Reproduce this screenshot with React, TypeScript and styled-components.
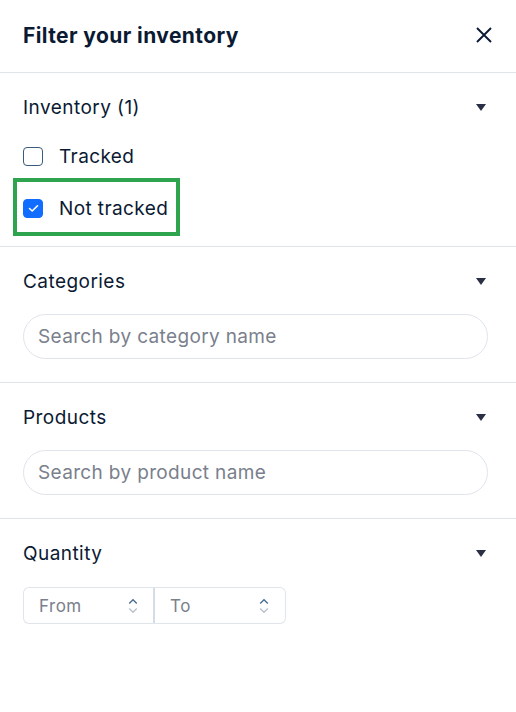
import React from "react";
import styled, { createGlobalStyle } from "styled-components";

const Global = createGlobalStyle`
  html, body { margin: 0; padding: 0; background: #fff; }
  body { font-family: "Inter", "Noto Sans", sans-serif; color: #0b1a33; }
  * { box-sizing: border-box; }
`;

const Panel = styled.div`
  width: 516px;
  min-height: 712px;
  background: #fff;
  display: flex;
  flex-direction: column;
  & > * { flex: none; }
`;

const Header = styled.div`
  height: 73px;
  display: flex;
  align-items: center;
  justify-content: space-between;
  padding: 0 24px 2px 23px;
  border-bottom: 1px solid #e1e4e8;
`;

const Title = styled.h1`
  margin: 0;
  font-size: 21px;
  font-weight: 700;
  letter-spacing: 0.4px;
  color: #0b1a33;
`;

const CloseBtn = styled.button`
  border: 0;
  background: none;
  padding: 0;
  width: 16px;
  height: 16px;
  display: flex;
  align-items: center;
  justify-content: center;
  cursor: pointer;
`;

const Section = styled.section<{ $last?: boolean }>`
  padding: 21px 28px 23px 23px;
  border-bottom: ${(p) => (p.$last ? "none" : "1px solid #e1e4e8")};
  display: flex;
  flex-direction: column;
`;

const SectionHead = styled.div`
  display: flex;
  align-items: center;
  justify-content: space-between;
  height: 26px;
  margin-bottom: 20px;
`;

const SectionTitle = styled.h2`
  margin: 0;
  font-size: 19px;
  font-weight: 400;
  letter-spacing: 0.45px;
  color: #0b1a33;
`;

const Caret = styled.div`
  width: 0;
  height: 0;
  border-left: 5px solid transparent;
  border-right: 5px solid transparent;
  border-top: 7px solid #2b2f45;
  margin-right: 2px;
`;

const CheckList = styled.div`
  display: flex;
  flex-direction: column;
  margin-top: -9px;
  margin-bottom: -13px;
`;

const CheckRow = styled.label<{ $highlight?: boolean }>`
  display: flex;
  align-items: center;
  gap: 16px;
  font-size: 19px;
  letter-spacing: 0.4px;
  color: #0b1a33;
  height: ${(p) => (p.$highlight ? "58px" : "50px")};
  margin-left: ${(p) => (p.$highlight ? "-10px" : "0")};
  margin-top: ${(p) => (p.$highlight ? "-3px" : "0")};
  padding: ${(p) => (p.$highlight ? "3px 0 0 6px" : "0")};
  width: ${(p) => (p.$highlight ? "167px" : "auto")};
  border: ${(p) => (p.$highlight ? "4px solid #2ea44f" : "none")};
`;

const Box = styled.span<{ $checked?: boolean }>`
  width: 20px;
  height: 19px;
  border-radius: 4px;
  flex: none;
  display: flex;
  align-items: center;
  justify-content: center;
  border: 1.5px solid ${(p) => (p.$checked ? "#116dff" : "#385c7a")};
  background: ${(p) => (p.$checked ? "#116dff" : "#fff")};
`;

const SearchInput = styled.div`
  height: 45px;
  border: 1px solid #dfe5eb;
  border-radius: 23px;
  display: flex;
  align-items: center;
  padding: 0 14px;
  font-size: 19px;
  letter-spacing: 0.35px;
  color: #7a808c;
`;

const RangeRow = styled.div`
  display: flex;
  width: 263px;
  height: 37px;
  margin-top: 1px;
  margin-bottom: 70px;
`;

const RangeField = styled.div<{ $side: "left" | "right" }>`
  flex: 1;
  display: flex;
  align-items: center;
  justify-content: space-between;
  padding: ${(p) => (p.$side === "left" ? "0 15px 0 15px" : "0 16px 0 15px")};
  border: 1px solid #dfe5eb;
  border-left-width: ${(p) => (p.$side === "right" ? "0" : "1px")};
  border-right: ${(p) => (p.$side === "left" ? "2px solid #d4dde6" : "1px solid #dfe5eb")};
  border-radius: ${(p) => (p.$side === "left" ? "6px 0 0 6px" : "0 6px 6px 0")};
  font-size: 17px;
  letter-spacing: 0.5px;
  color: #7a808c;
`;

const Spinner = () => (
  <svg width="10" height="20" viewBox="0 0 10 20">
    <path d="M1.2 7.5 L5 3.8 L8.8 7.5" fill="none" stroke="#4a6e90" strokeWidth="1.4" />
    <path d="M1.2 12.5 L5 16.2 L8.8 12.5" fill="none" stroke="#b8c2cc" strokeWidth="1.4" />
  </svg>
);

const Check = () => (
  <svg width="11" height="9" viewBox="0 0 11 9">
    <path d="M1.5 4.5 L4.2 7 L9.5 1.8" fill="none" stroke="#fff" strokeWidth="1.6" strokeLinecap="round" strokeLinejoin="round" />
  </svg>
);

export default function App() {
  return (
    <>
      <Global />
      <Panel>
        <Header>
          <Title>Filter your inventory</Title>
          <CloseBtn aria-label="Close">
            <svg width="16" height="16" viewBox="0 0 16 16">
              <path d="M1 1 L15 15 M15 1 L1 15" stroke="#0b1a33" strokeWidth="1.9" />
            </svg>
          </CloseBtn>
        </Header>

        <Section>
          <SectionHead>
            <SectionTitle>Inventory (1)</SectionTitle>
            <Caret />
          </SectionHead>
          <CheckList>
            <CheckRow>
              <Box />
              Tracked
            </CheckRow>
            <CheckRow $highlight>
              <Box $checked>
                <Check />
              </Box>
              Not tracked
            </CheckRow>
          </CheckList>
        </Section>

        <Section>
          <SectionHead>
            <SectionTitle>Categories</SectionTitle>
            <Caret />
          </SectionHead>
          <SearchInput>Search by category name</SearchInput>
        </Section>

        <Section>
          <SectionHead>
            <SectionTitle>Products</SectionTitle>
            <Caret />
          </SectionHead>
          <SearchInput>Search by product name</SearchInput>
        </Section>

        <Section $last>
          <SectionHead>
            <SectionTitle>Quantity</SectionTitle>
            <Caret />
          </SectionHead>
          <RangeRow>
            <RangeField $side="left">
              From
              <Spinner />
            </RangeField>
            <RangeField $side="right">
              To
              <Spinner />
            </RangeField>
          </RangeRow>
        </Section>
      </Panel>
    </>
  );
}
